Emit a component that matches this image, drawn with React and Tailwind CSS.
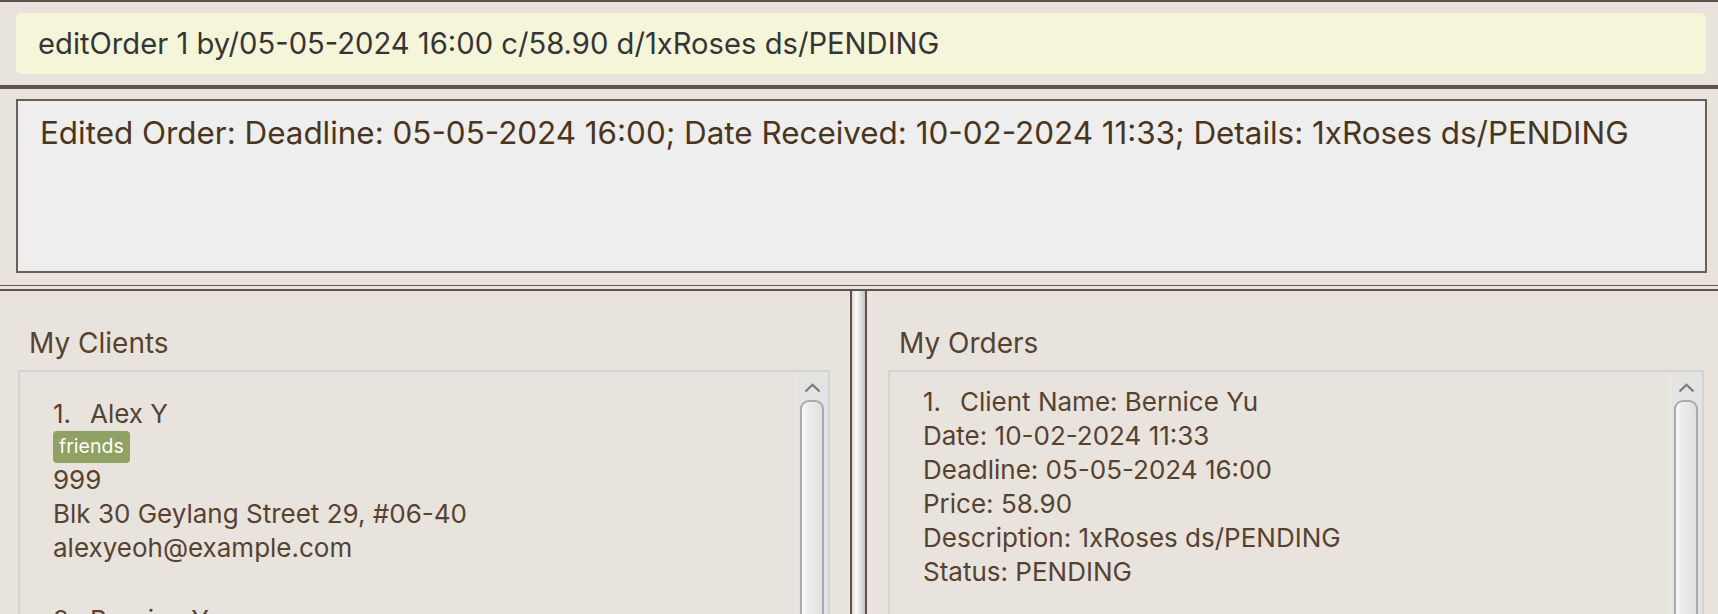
function Scrollbar() {
  return (
    <div className="w-[32px] shrink-0 mt-[3px] bg-[#e3e3e3] border-l border-[#ececec] flex flex-col">
      <div className="h-[25px] flex items-center justify-center">
        <svg width="17" height="10" viewBox="0 0 17 10">
          <polyline points="1.5,8.5 8.5,1.8 15.5,8.5" fill="none" stroke="#7a7a7a" strokeWidth="2.2" />
        </svg>
      </div>
      <div className="ml-[3px] w-[24px] flex-1 rounded-t-[9px] border-2 border-b-0 border-[#ababab] bg-linear-to-r from-[#fbfbfb] via-[#efefef] via-20% to-[#e0e0e0]" />
    </div>
  );
}

function ClientCard({ idx, name, tags, phone, address, email }) {
  return (
    <div className="pt-[25px] pb-[13px] pl-[33px]">
      <div className="flex h-[34px] leading-[34px]">
        <span className="w-[37px]">{idx}.</span>
        <span>{name}</span>
      </div>
      <div className="flex gap-1 h-[32px]">
        {tags.map((t) => (
          <span key={t} className="h-[32px] px-[6px] rounded-[4px] bg-[#8fa163] text-white text-[19.5px] leading-[31px]">{t}</span>
        ))}
      </div>
      <div className="leading-[34px]">{phone}</div>
      <div className="leading-[34px]">{address}</div>
      <div className="leading-[34px]">{email}</div>
    </div>
  );
}

function OrderCard({ idx, lines }) {
  return (
    <div className="pt-[13px] pb-[13px] pl-[33px]">
      <div className="flex h-[34px] leading-[34px]">
        <span className="w-[37px]">{idx}.</span>
        <span>{lines[0]}</span>
      </div>
      {lines.slice(1).map((l) => (
        <div key={l} className="leading-[34px]">{l}</div>
      ))}
    </div>
  );
}

export default function App() {
  return (
    <div className="w-[1718px] h-[614px] overflow-hidden bg-[#e8e3dd] flex flex-col font-['Inter',sans-serif]">
      <div className="shrink-0 border-t-2 border-[#5e5249] pt-[11px] pb-[11px] pl-4 pr-3">
        <div className="h-[61px] rounded-[5px] bg-[#f5f5da] pl-[22px] pt-[14px] text-[29.2px] leading-[34px] text-[#353535] whitespace-nowrap">
          editOrder 1 by/05-05-2024 16:00 c/58.90 d/1xRoses ds/PENDING
        </div>
      </div>
      <div className="shrink-0 h-1 bg-[#5e5249]" />
      <div className="shrink-0 pt-[10px] pb-[12px] pl-4 pr-[11px]">
        <div className="h-[174px] border-2 border-[#6a5f56] bg-[#eeeeee] pl-[22px] pt-[14px] text-[31.4px] leading-[36px] text-[#4a3520] whitespace-nowrap">
          Edited Order: Deadline: 05-05-2024 16:00; Date Received: 10-02-2024 11:33; Details: 1xRoses ds/PENDING
        </div>
      </div>
      <div className="shrink-0 h-px bg-[#5e5249]" />
      <div className="shrink-0 h-[3px]" />
      <div className="flex-1 min-h-0 flex border-t-2 border-[#5e5249] text-[#574230]">
        <div className="w-[852px] shrink-0 border-r-2 border-[#5e5249] pl-[18px] pr-[20px] pt-[35px] flex flex-col">
          <div className="pl-[11px] h-[34px] text-[28px] leading-[34px]">My Clients</div>
          <div className="mt-[10px] flex-1 min-h-0 border-2 border-b-0 border-[#d4d4d4] flex overflow-hidden">
            <div className="flex-1 text-[26px]">
              <ClientCard idx={1} name="Alex Y" tags={["friends"]} phone="999" address="Blk 30 Geylang Street 29, #06-40" email="alexyeoh@example.com" />
              <ClientCard idx={2} name="Bernice Yu" tags={["colleagues", "friends"]} phone="99272758" address="Blk 30 Lorong 3 Serangoon Gardens, #07-18" email="berniceyu@example.com" />
            </div>
            <Scrollbar />
          </div>
        </div>
        <div className="w-[13px] shrink-0 bg-linear-to-r from-[#d8d8d8] via-[#fbfbfb] via-30% to-[#c6c6c6]" />
        <div className="flex-1 min-w-0 border-l-2 border-[#5e5249] pl-[21px] pr-[14px] pt-[35px] flex flex-col">
          <div className="pl-[11px] h-[34px] text-[28px] leading-[34px]">My Orders</div>
          <div className="mt-[10px] flex-1 min-h-0 border-2 border-b-0 border-[#d4d4d4] flex overflow-hidden">
            <div className="flex-1 text-[26px]">
              <OrderCard idx={1} lines={["Client Name: Bernice Yu", "Date: 10-02-2024 11:33", "Deadline: 05-05-2024 16:00", "Price: 58.90", "Description: 1xRoses ds/PENDING", "Status: PENDING"]} />
              <OrderCard idx={2} lines={["Client Name: Alex Y", "Date: 12-02-2024 09:15", "Deadline: 20-02-2024 12:00", "Price: 30.00", "Description: 2xLilies", "Status: PENDING"]} />
            </div>
            <Scrollbar />
          </div>
        </div>
      </div>
    </div>
  );
}
